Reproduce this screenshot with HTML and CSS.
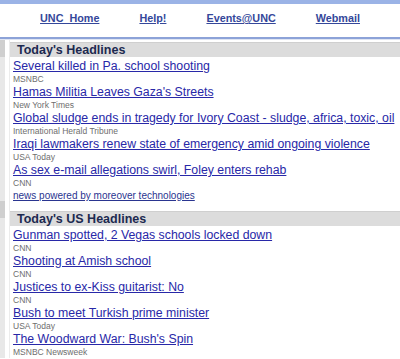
FILE: index.html
```html
<!DOCTYPE html>
<html lang="en">
<head>
<meta charset="UTF-8">
<title>UNC Headlines</title>
<link rel="stylesheet" href="styles.css">
</head>
<body>
    <div class="topbar"></div>
    <nav class="nav">
        <a href="#">UNC_Home</a>
        <a href="#">Help!</a>
        <a href="#">Events@UNC</a>
        <a href="#">Webmail</a>
    </nav>
    <div class="rule"></div>

    <div class="page">
        <div class="sidebar">
            <div class="side-dark"></div>
            <div class="side-gap"></div>
            <div class="side-dark"></div>
        </div>

        <div class="content">
            <h2 class="band">Today's Headlines</h2>
            <ul class="news">
                <li><a href="#">Several killed in Pa. school shooting</a><span>MSNBC</span></li>
                <li><a href="#">Hamas Militia Leaves Gaza's Streets</a><span>New York Times</span></li>
                <li><a href="#">Global sludge ends in tragedy for Ivory Coast - sludge, africa, toxic, oil</a><span>International Herald Tribune</span></li>
                <li><a href="#">Iraqi lawmakers renew state of emergency amid ongoing violence</a><span>USA Today</span></li>
                <li><a href="#">As sex e-mail allegations swirl, Foley enters rehab</a><span>CNN</span></li>
            </ul>
            <a class="powered" href="#">news powered by moreover technologies</a>

            <h2 class="band">Today's US Headlines</h2>
            <ul class="news">
                <li><a href="#">Gunman spotted, 2 Vegas schools locked down</a><span>CNN</span></li>
                <li><a href="#">Shooting at Amish school</a><span>CNN</span></li>
                <li><a href="#">Justices to ex-Kiss guitarist: No</a><span>CNN</span></li>
                <li><a href="#">Bush to meet Turkish prime minister</a><span>USA Today</span></li>
                <li><a href="#">The Woodward War: Bush's Spin</a><span>MSNBC Newsweek</span></li>
            </ul>
        </div>
    </div>
</body>
</html>
```

FILE: styles.css
```css
* {
    margin: 0;
    padding: 0;
    box-sizing: border-box;
}
body {
    font-family: 'Liberation Sans', Arial, sans-serif;
    background-color: #fff;
    overflow: hidden;
}
.topbar {
    height: 4px;
    background-color: #9bb3e6;
}
.nav {
    display: flex;
    justify-content: center;
    gap: 40px;
    height: 33px;
    padding-top: 7px;
}
.nav a {
    font-size: 10.8px;
    font-weight: bold;
    color: #34479a;
    line-height: 14px;
}
.rule {
    height: 2px;
    background-color: #8da3d8;
    border-bottom: 1px solid #dfe5f3;
    box-sizing: content-box;
}
.page {
    display: grid;
    grid-template-columns: 5px 1fr;
    column-gap: 4px;
}
.sidebar {
    background-color: #e8e8e8;
}
.side-dark {
    height: 17px;
    background-color: #cfcfcf;
}
.side-gap {
    height: 144px;
}
.content {
    border-left: 1px solid #ececec;
    padding-top: 2px;
}
.band {
    font-size: 12.5px;
    font-weight: bold;
    color: #1c2a50;
    background-color: #dcdcdc;
    border-top: 1px solid #cfcfcf;
    height: 15px;
    line-height: 14px;
    padding-left: 7px;
}
.news {
    list-style: none;
    padding-left: 3px;
    padding-top: 2px;
}
.news li {
    display: flex;
    flex-direction: column;
    height: 26px;
}
.news a {
    font-size: 12.3px;
    line-height: 15px;
    color: #2828a8;
    white-space: nowrap;
}
.news span {
    font-size: 8.5px;
    line-height: 10px;
    color: #6e6e6e;
}
.powered {
    display: block;
    font-size: 10px;
    line-height: 12px;
    color: #2a3590;
    padding-left: 3px;
    margin-top: 1px;
    margin-bottom: 9px;
}
```
